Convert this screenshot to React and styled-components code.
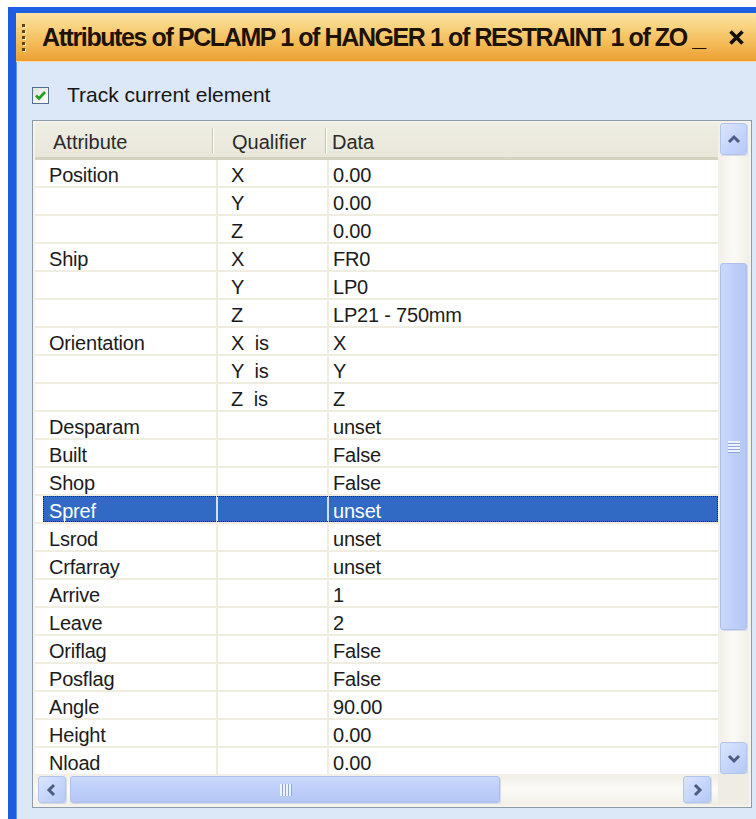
import React from "react";
import styled, { createGlobalStyle } from "styled-components";

const GlobalStyle = createGlobalStyle`
  html, body {
    margin: 0;
    padding: 0;
    background: #ffffff;
  }
  * {
    box-sizing: border-box;
  }
`;

const Page = styled.div`
  width: 756px;
  height: 819px;
  padding: 7px 0 0 8px;
  background: #ffffff;
  overflow: hidden;
`;

const Window = styled.div`
  display: flex;
  flex-direction: column;
  height: 100%;
  border-top: 6px solid #1f5fe2;
  border-left: 8px solid #1c5cde;
  box-shadow: inset 1px 0 0 #5f95f0;
  background: #dce7f8;
`;

const TitleBar = styled.div`
  display: flex;
  align-items: center;
  height: 49px;
  padding: 0 8px 0 6px;
  background: linear-gradient(to bottom, #fbe3a2 0%, #f8d27e 30%, #f2b650 70%, #ec9f33 100%);
  border-bottom: 1px solid #f6d9a6;
`;

const Grip = styled.div`
  display: flex;
  flex-direction: column;
  gap: 3px;
  margin-right: 17px;

  span {
    width: 3px;
    height: 3px;
    background: #5c4316;
    box-shadow: 1px 1px 0 #fff3d0;
  }
`;

const Title = styled.div`
  flex: 1;
  font-family: "Liberation Sans", Arial, sans-serif;
  font-weight: bold;
  font-size: 25px;
  letter-spacing: -1.4px;
  color: #1d1205;
  white-space: nowrap;
  overflow: hidden;
`;

const CloseButton = styled.div`
  display: flex;
  align-items: center;
  justify-content: center;
  width: 22px;
  height: 22px;
  margin-right: 1px;
`;

const Content = styled.div`
  flex: 1;
  display: flex;
  flex-direction: column;
  padding: 23px 4px 11px 16px;
  min-height: 0;
`;

const CheckRow = styled.label`
  display: flex;
  align-items: center;
  height: 20px;
  margin-bottom: 15px;
  font-family: "Liberation Sans", Arial, sans-serif;
  font-size: 21px;
  color: #161616;
`;

const CheckBox = styled.span`
  display: flex;
  align-items: center;
  justify-content: center;
  width: 17px;
  height: 17px;
  margin-right: 18px;
  border: 1px solid #52708f;
  background: linear-gradient(135deg, #e2e2dc, #ffffff);
`;

const Grid = styled.div`
  flex: 1;
  display: grid;
  grid-template-columns: 1fr 31px;
  grid-template-rows: 1fr 31px;
  padding: 2px;
  border: 1px solid #8d9bab;
  background: #f4f3ee;
  min-height: 0;
`;

const Main = styled.div`
  display: flex;
  flex-direction: column;
  overflow: hidden;
  background: #ffffff;
`;

const HeaderRow = styled.div`
  display: grid;
  grid-template-columns: 178px 113px 1fr;
  height: 37px;
  flex-shrink: 0;
  background: linear-gradient(to bottom, #efeee3, #e9e7da);
  border-bottom: 3px solid #d6d2c0;
`;

const HeaderCell = styled.div`
  position: relative;
  display: flex;
  align-items: center;
  padding: 5px 0 0 ${(p) => p.$pad}px;
  font-family: "Liberation Sans", Arial, sans-serif;
  font-size: 20px;
  color: #2a2a2a;

  &::after {
    content: "";
    display: ${(p) => (p.$divider ? "block" : "none")};
    position: absolute;
    right: 0;
    top: 5px;
    bottom: 4px;
    width: 1px;
    background: #c8c5b3;
    box-shadow: 1px 0 0 #ffffff;
  }
`;

const Body = styled.div`
  flex: 1;
  overflow: hidden;
`;

const Row = styled.div`
  position: relative;
  display: grid;
  grid-template-columns: 8px 173px 111px 1fr;
  height: 28px;
  border-bottom: 2px solid #efece0;

  &::after {
    content: "";
    display: ${(p) => (p.$selected ? "block" : "none")};
    position: absolute;
    left: 8px;
    right: 0;
    top: 0;
    bottom: 0;
    border: 1px dotted #1b2b45;
    pointer-events: none;
  }
`;

const Cell = styled.div`
  display: flex;
  align-items: center;
  padding: 4px 0 0 ${(p) => p.$pad}px;
  border-left: ${(p) => (p.$divider ? `2px solid ${p.$selected ? "#d3ddef" : "#efece0"}` : "none")};
  background: ${(p) => (p.$selected ? "#316ac5" : "#ffffff")};
  color: ${(p) => (p.$selected ? "#ffffff" : "#1b1b1b")};
  font-family: "Liberation Sans", Arial, sans-serif;
  font-size: 20px;
  letter-spacing: -0.2px;
  white-space: pre;
  overflow: hidden;
`;

const RowHead = styled.div`
  background: #ffffff;
`;

const VScroll = styled.div`
  display: flex;
  flex-direction: column;
  padding: 0 1px 0 2px;
  background: linear-gradient(to right, #f1efe6, #fbfaf6 50%, #f1efe6);
`;

const HScroll = styled.div`
  display: flex;
  align-items: center;
  padding: 0 7px 0 3px;
  background: linear-gradient(to bottom, #f1efe6, #fbfaf6 50%, #f1efe6);
`;

const Corner = styled.div`
  background: #efede3;
`;

const ScrollButton = styled.div`
  display: flex;
  align-items: center;
  justify-content: center;
  flex-shrink: 0;
  width: ${(p) => (p.$horizontal ? "28px" : "27px")};
  height: ${(p) => (p.$horizontal ? "27px" : "32px")};
  border: 1px solid #b3c4ec;
  border-radius: 3px;
  background: linear-gradient(135deg, #dbe5fd, #c3d3fb 60%, #b7c9f6);
  box-shadow: 1px 1px 0 #d6dbe6;
`;

const Thumb = styled.div`
  display: flex;
  align-items: center;
  justify-content: center;
  flex-shrink: 0;
  border: 1px solid #aebfe9;
  border-radius: 3px;
  background: ${(p) =>
    p.$horizontal
      ? "linear-gradient(to bottom, #cad8fd, #bccdf8 60%, #b4c7f4)"
      : "linear-gradient(to right, #cad8fd, #bccdf8 60%, #b4c7f4)"};
  box-shadow: 1px 1px 0 #d6dbe6;
  width: ${(p) => (p.$horizontal ? `${p.$size}px` : "27px")};
  height: ${(p) => (p.$horizontal ? "27px" : `${p.$size}px`)};
  margin: ${(p) => (p.$horizontal ? `0 0 0 ${p.$offset}px` : `${p.$offset}px 0 0 0`)};
`;

const GripLines = styled.div`
  display: flex;
  flex-direction: ${(p) => (p.$horizontal ? "row" : "column")};
  gap: 1px;

  span {
    background: #eef3ff;
    box-shadow: ${(p) => (p.$horizontal ? "1px 0 0 #8ea6df" : "0 1px 0 #8ea6df")};
    width: ${(p) => (p.$horizontal ? "2px" : "12px")};
    height: ${(p) => (p.$horizontal ? "12px" : "2px")};
  }
`;

const Spacer = styled.div`
  flex: 1;
`;

const Chevron = ({ dir }) => {
  const pts = {
    up: "3,11 8,6 13,11",
    down: "3,6 8,11 13,6",
    left: "10,3 5,8 10,13",
    right: "6,3 11,8 6,13",
  }[dir];
  return (
    <svg width="16" height="16" viewBox="0 0 16 16">
      <polyline points={pts} fill="none" stroke="#4b5e82" strokeWidth="3" strokeLinejoin="miter" />
    </svg>
  );
};

const rows = [
  ["Position", "X", "0.00"],
  ["", "Y", "0.00"],
  ["", "Z", "0.00"],
  ["Ship", "X", "FR0"],
  ["", "Y", "LP0"],
  ["", "Z", "LP21 - 750mm"],
  ["Orientation", "X  is", "X"],
  ["", "Y  is", "Y"],
  ["", "Z  is", "Z"],
  ["Desparam", "", "unset"],
  ["Built", "", "False"],
  ["Shop", "", "False"],
  ["Spref", "", "unset"],
  ["Lsrod", "", "unset"],
  ["Crfarray", "", "unset"],
  ["Arrive", "", "1"],
  ["Leave", "", "2"],
  ["Oriflag", "", "False"],
  ["Posflag", "", "False"],
  ["Angle", "", "90.00"],
  ["Height", "", "0.00"],
  ["Nload", "", "0.00"],
];

const selectedRow = 12;

export default function App() {
  return (
    <>
      <GlobalStyle />
      <Page>
        <Window>
          <TitleBar>
            <Grip>
              <span />
              <span />
              <span />
              <span />
              <span />
            </Grip>
            <Title>Attributes of PCLAMP 1 of HANGER 1 of RESTRAINT 1 of ZO _</Title>
            <CloseButton>
              <svg width="17" height="17" viewBox="0 0 17 17">
                <path d="M2.5 2.5 L14.5 14.5 M14.5 2.5 L2.5 14.5" stroke="#111" strokeWidth="3.6" />
              </svg>
            </CloseButton>
          </TitleBar>

          <Content>
            <CheckRow>
              <CheckBox>
                <svg width="13" height="13" viewBox="0 0 13 13">
                  <polyline points="2,6.5 5,9.5 11,3" fill="none" stroke="#21a121" strokeWidth="2.6" />
                </svg>
              </CheckBox>
              Track current element
            </CheckRow>

            <Grid>
              <Main>
                <HeaderRow>
                  <HeaderCell $pad={18} $divider>Attribute</HeaderCell>
                  <HeaderCell $pad={19} $divider>Qualifier</HeaderCell>
                  <HeaderCell $pad={6}>Data</HeaderCell>
                </HeaderRow>
                <Body>
                  {rows.map(([attr, qual, data], i) => {
                    const sel = i === selectedRow;
                    return (
                      <Row key={i} $selected={sel}>
                        <RowHead />
                        <Cell $pad={6} $selected={sel}>{attr}</Cell>
                        <Cell $pad={13} $divider $selected={sel}>{qual}</Cell>
                        <Cell $pad={4} $divider $selected={sel}>{data}</Cell>
                      </Row>
                    );
                  })}
                </Body>
              </Main>

              <VScroll>
                <ScrollButton>
                  <Chevron dir="up" />
                </ScrollButton>
                <Thumb $size={367} $offset={108}>
                  <GripLines>
                    <span />
                    <span />
                    <span />
                    <span />
                  </GripLines>
                </Thumb>
                <Spacer />
                <ScrollButton>
                  <Chevron dir="down" />
                </ScrollButton>
              </VScroll>

              <HScroll>
                <ScrollButton $horizontal>
                  <Chevron dir="left" />
                </ScrollButton>
                <Thumb $horizontal $size={430} $offset={4}>
                  <GripLines $horizontal>
                    <span />
                    <span />
                    <span />
                    <span />
                  </GripLines>
                </Thumb>
                <Spacer />
                <ScrollButton $horizontal>
                  <Chevron dir="right" />
                </ScrollButton>
              </HScroll>
              <Corner />
            </Grid>
          </Content>
        </Window>
      </Page>
    </>
  );
}
